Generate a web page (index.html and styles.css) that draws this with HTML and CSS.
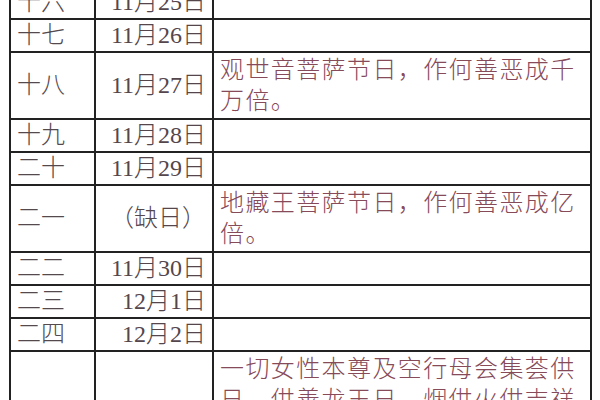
FILE: index.html
```html
<!DOCTYPE html>
<html lang="zh-CN">
<head>
<meta charset="utf-8">
<link rel="stylesheet" href="styles.css">
</head>
<body>
<div class="page">
<table class="cal">
<colgroup><col class="c-day"><col class="c-date"><col class="c-note"></colgroup>
<tr><td class="day">十六</td><td class="date">11月25日</td><td class="note"></td></tr>
<tr><td class="day">十七</td><td class="date">11月26日</td><td class="note"></td></tr>
<tr><td class="day">十八</td><td class="date">11月27日</td><td class="note tall">观世音菩萨节日，作何善恶成千万倍。</td></tr>
<tr><td class="day">十九</td><td class="date">11月28日</td><td class="note"></td></tr>
<tr><td class="day">二十</td><td class="date">11月29日</td><td class="note"></td></tr>
<tr><td class="day">二一</td><td class="date">（缺日）</td><td class="note tall">地藏王菩萨节日，作何善恶成亿倍。</td></tr>
<tr><td class="day">二二</td><td class="date">11月30日</td><td class="note"></td></tr>
<tr><td class="day">二三</td><td class="date">12月1日</td><td class="note"></td></tr>
<tr><td class="day">二四</td><td class="date">12月2日</td><td class="note"></td></tr>
<tr><td class="day"></td><td class="date"></td><td class="note tall">一切女性本尊及空行母会集荟供日，供善龙王日，烟供火供吉祥日。</td></tr>
</table>
</div>
</body>
</html>
```
FILE: styles.css
```css
html, body {
  margin: 0;
  padding: 0;
  background: #ffffff;
}
.page {
  width: 600px;
  height: 400px;
  overflow: hidden;
  padding-left: 9px;
  box-sizing: border-box;
}
.cal {
  margin-top: -15px;
  border-collapse: collapse;
  table-layout: fixed;
  width: 581px;
  font-family: "Liberation Serif", "Noto Sans CJK SC", serif;
  font-size: 24px;
  font-weight: 300;
  line-height: 31px;
}
.c-day { width: 85px; }
.c-date { width: 118px; }
.c-note { width: 378px; }
.cal td {
  border: 2px solid #222222;
  padding: 0 6px;
  height: 31px;
  vertical-align: middle;
  white-space: nowrap;
}
.day {
  color: #54494d;
  text-align: left;
}
.date {
  color: #55464b;
  text-align: right;
}
.cal td.note {
  color: #864a59;
  white-space: normal;
  letter-spacing: 1.4px;
  text-align: left;
}
.cal td.tall {
  padding-top: 2px;
  padding-bottom: 1px;
}
```
